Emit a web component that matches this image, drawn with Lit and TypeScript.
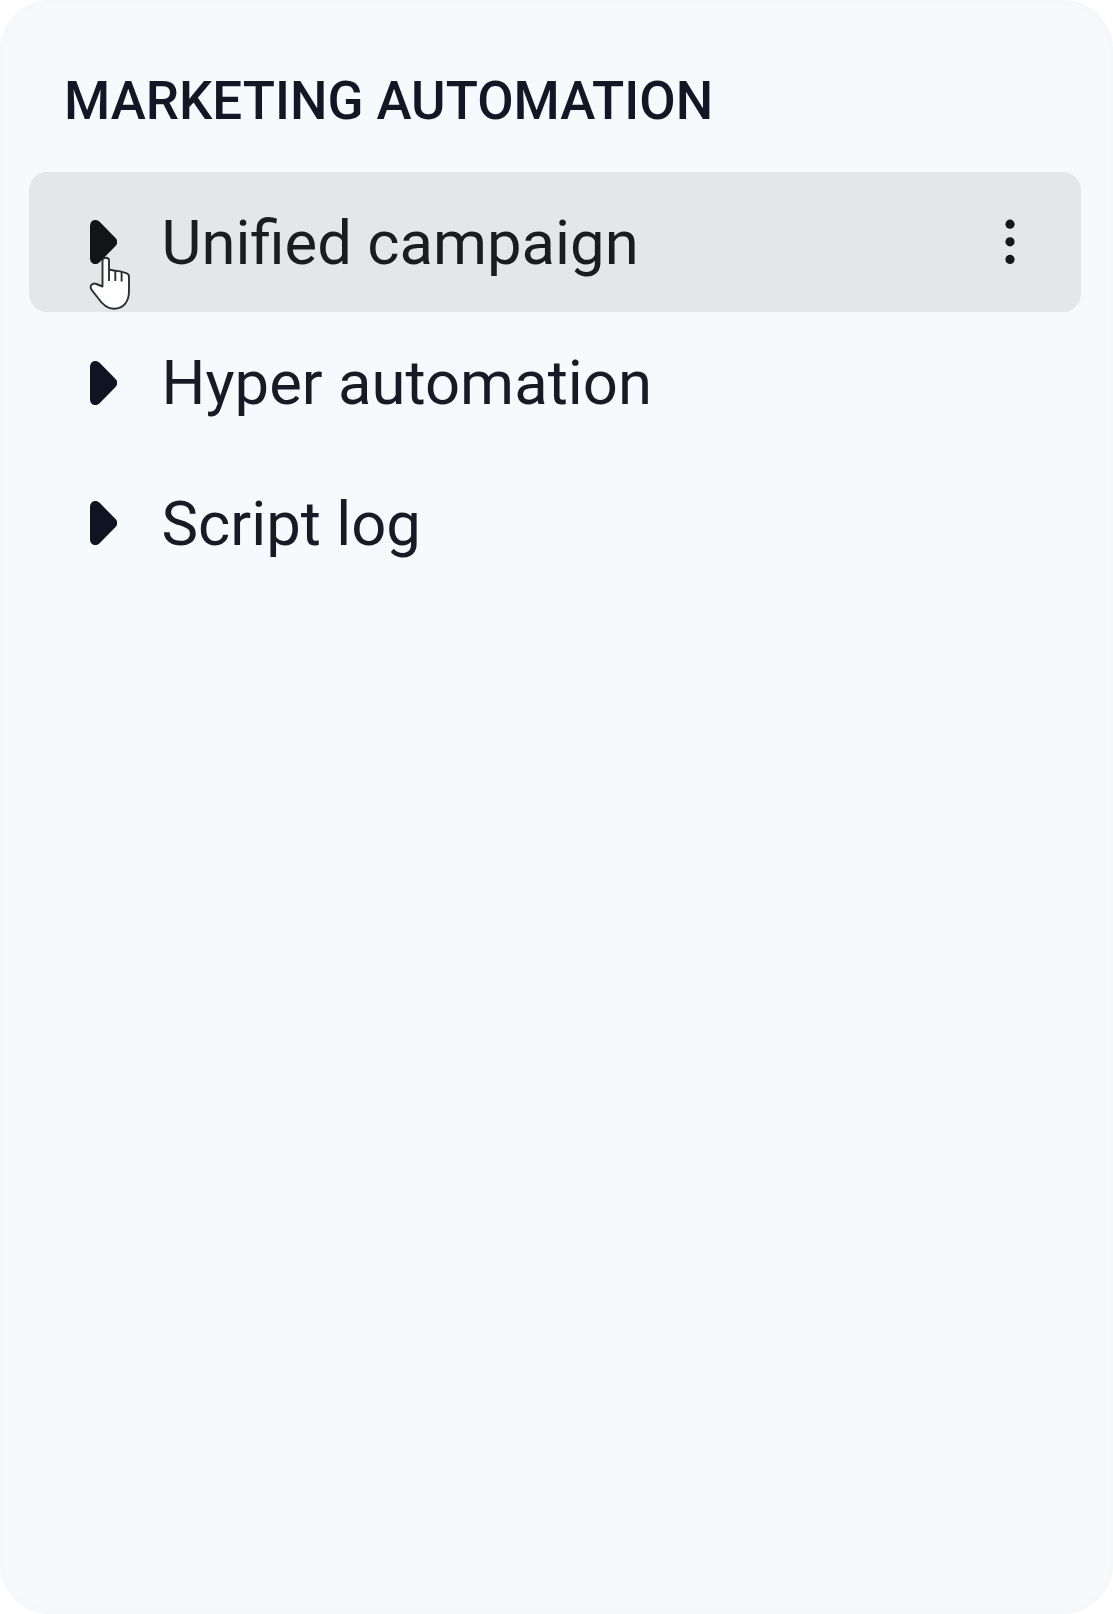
import { LitElement, html, css, svg, nothing } from "lit";
import { customElement, property } from "lit/decorators.js";

@customElement("tree-row")
class TreeRow extends LitElement {
  @property() label = "";
  @property({ type: Boolean, reflect: true }) hovered = false;

  static styles = css`
    :host { display: block; }
    .row {
      position: relative;
      box-sizing: border-box;
      height: 140px;
      padding: 0 65px 0 60.5px;
      display: flex;
      align-items: center;
      border-radius: 18px;
      color: #181b26;
    }
    .hovered { background: #e5e6e8; color: #1b1c20; }
    .arrow { width: 27.5px; height: 46px; flex: none; display: block; }
    .label {
      flex: 1;
      margin-left: 44.5px;
      padding-top: 1px;
      font-size: 61.6px;
      line-height: 70px;
      white-space: nowrap;
    }
    .more { width: 12px; height: 48px; flex: none; display: block; }
    .cursor {
      position: absolute;
      left: 60px;
      top: 84px;
      width: 44px;
      height: 56px;
    }
  `;

  render() {
    return html`<div class="row ${this.hovered ? "hovered" : ""}">
      <svg class="arrow" viewBox="0 0 28 46" preserveAspectRatio="none">
        <path fill=${this.hovered ? "#121418" : "#101322"} d="M0 7C0 .8 6 -.8 9.8 2.8L26 19Q29.8 23 26 27L9.8 43.2C6 46.8 0 45.2 0 39Z"/>
      </svg>
      <span class="label">${this.label}</span>
      ${this.hovered
        ? html`<svg class="more" viewBox="0 0 12 48">
              <g fill="#16181e">
                ${[6.2, 23.8, 41.4].map((y) => svg`<circle cx="6" cy=${y} r="4.6" />`)}
              </g>
            </svg>
            <svg class="cursor" viewBox="0 0 44 56">
              <path d="M13.5 30V4.5C13.5 .8 20 .8 20 4.5V13.5L24.8 14.5L31 15.4L36.6 16.8Q40 17.6 40 20.5V35C40 45 35 52.7 25 52.7C18 52.7 13 48 9 42L2.8 34.2C-.2 29.5 3.4 26.5 7.4 28L13.5 30.5Z"
                fill="#fff" stroke="#2b2e35" stroke-width="1.9" stroke-linejoin="round"/>
              <path d="M20 13.5V25M26.3 15V25M32.6 16V25.5" fill="none" stroke="#2b2e35" stroke-width="1.9"/>
            </svg>`
        : nothing}
    </div>`;
  }
}

@customElement("app-root")
class AppRoot extends LitElement {
  static styles = css`
    :host {
      display: block;
      height: 1614px;
      background: #fff;
      font-family: Roboto, sans-serif;
    }
    .panel {
      box-sizing: border-box;
      height: 100%;
      padding: 71px 32px 0 29px;
      border-radius: 50px;
      background: #f7fafd;
      box-shadow: inset 0 0 8px 4px #f6f6f8;
      overflow: hidden;
    }
    .title {
      margin: 0;
      padding: 0 35px 41px;
      height: 60px;
      font-size: 52.85px;
      line-height: 60px;
      font-weight: 500;
      color: #131725;
      white-space: nowrap;
    }
    .tree { display: flex; flex-direction: column; gap: 0.6px; }
  `;

  render() {
    return html`<div class="panel">
      <h2 class="title">MARKETING AUTOMATION</h2>
      <div class="tree">
        <tree-row label="Unified campaign" hovered></tree-row>
        <tree-row label="Hyper automation"></tree-row>
        <tree-row label="Script log"></tree-row>
      </div>
    </div>`;
  }
}
